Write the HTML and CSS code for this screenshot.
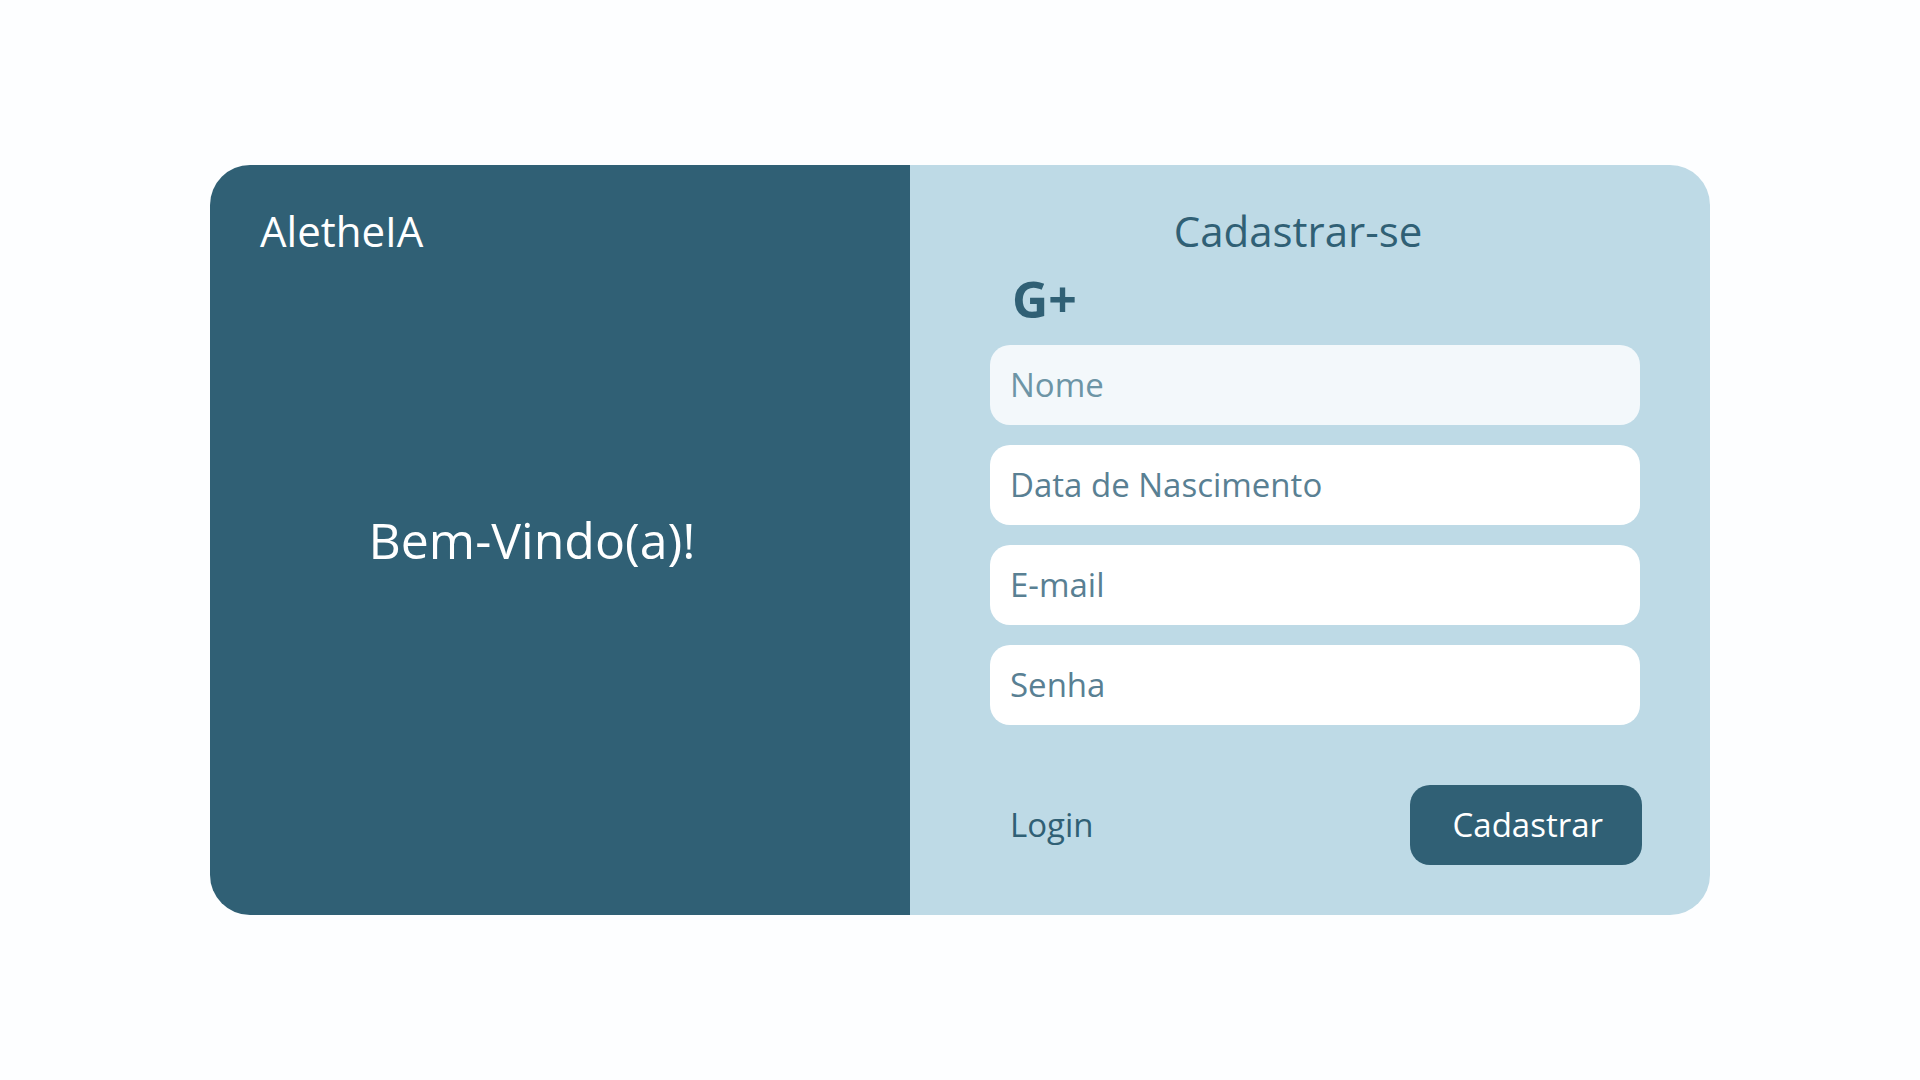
FILE: index.html
```html
<!DOCTYPE html>
<html lang="pt-BR">
<head>
  <meta charset="utf-8">
  <meta name="viewport" content="width=device-width, initial-scale=1">
  <title>AletheIA</title>
  <link rel="stylesheet" href="styles.css">
</head>
<body>
  <main class="card">
    <section class="welcome">
      <h1 class="brand">AletheIA</h1>
      <p class="greeting">Bem-Vindo(a)!</p>
    </section>
    <section class="signup">
      <h2 class="title">Cadastrar-se</h2>
      <button class="google" type="button">G+</button>
      <form class="form">
        <input class="field field-active" type="text" name="nome" placeholder="Nome" aria-label="Nome">
        <input class="field" type="text" name="nascimento" placeholder="Data de Nascimento" aria-label="Data de Nascimento">
        <input class="field" type="email" name="email" placeholder="E-mail" aria-label="E-mail">
        <input class="field" type="password" name="senha" placeholder="Senha" aria-label="Senha">
        <div class="actions">
          <a class="login" href="#login">Login</a>
          <button class="submit" type="submit">Cadastrar</button>
        </div>
      </form>
    </section>
  </main>
</body>
</html>
```

FILE: styles.css
```css
:root {
  --dark: #306075;
  --light: #bedae6;
}

* {
  box-sizing: border-box;
}

body {
  margin: 0;
  min-height: 100vh;
  padding: 24px;
  display: flex;
  align-items: center;
  justify-content: center;
  background: #fdfeff;
  color: var(--dark);
  font-family: "Open Sans", "Noto Sans", sans-serif;
  font-size: 33px;
}

.card {
  width: 100%;
  max-width: 1500px;
  display: grid;
  grid-template-columns: 7fr 8fr;
  border-radius: 40px;
  overflow: hidden;
}

.welcome {
  display: grid;
  grid-template-rows: 1fr auto 1fr;
  padding: 40px 106px 40px 50px;
  background: var(--dark);
  color: #fff;
}

.brand,
.title {
  margin: 0;
  font-size: 42px;
  font-weight: 400;
  line-height: 52px;
}

.greeting {
  margin: 0;
  font-size: 50px;
  line-height: 60px;
  text-align: center;
}

.signup {
  display: flex;
  flex-direction: column;
  padding: 40px 70px 50px 80px;
  background: var(--light);
}

.title {
  padding-right: 34px;
  text-align: center;
}

.google {
  align-self: flex-start;
  margin: 12px 0 16px;
  padding: 0 22px;
  border: 0;
  background: none;
  color: var(--dark);
  font: 700 50px/60px "Open Sans", "Noto Sans", sans-serif;
  cursor: pointer;
}

.form {
  display: flex;
  flex-direction: column;
  gap: 20px;
}

.field {
  width: 100%;
  height: 80px;
  padding: 0 20px 2px;
  border: 0;
  border-radius: 20px;
  background: #fff;
  color: var(--dark);
  font: inherit;
}

.field::placeholder {
  color: #598093;
  opacity: 1;
}

.field-active {
  background: #f3f8fb;
}

.field-active::placeholder {
  color: #6d95a6;
}

.actions {
  display: flex;
  align-items: center;
  justify-content: space-between;
  margin: 40px -2px 0 0;
  padding-left: 20px;
}

.login {
  padding-bottom: 2px;
  color: var(--dark);
  text-decoration: none;
}

.submit {
  height: 80px;
  padding: 0 39px 2px 43px;
  border: 0;
  border-radius: 20px;
  background: var(--dark);
  color: #fff;
  font: inherit;
  cursor: pointer;
}
```
